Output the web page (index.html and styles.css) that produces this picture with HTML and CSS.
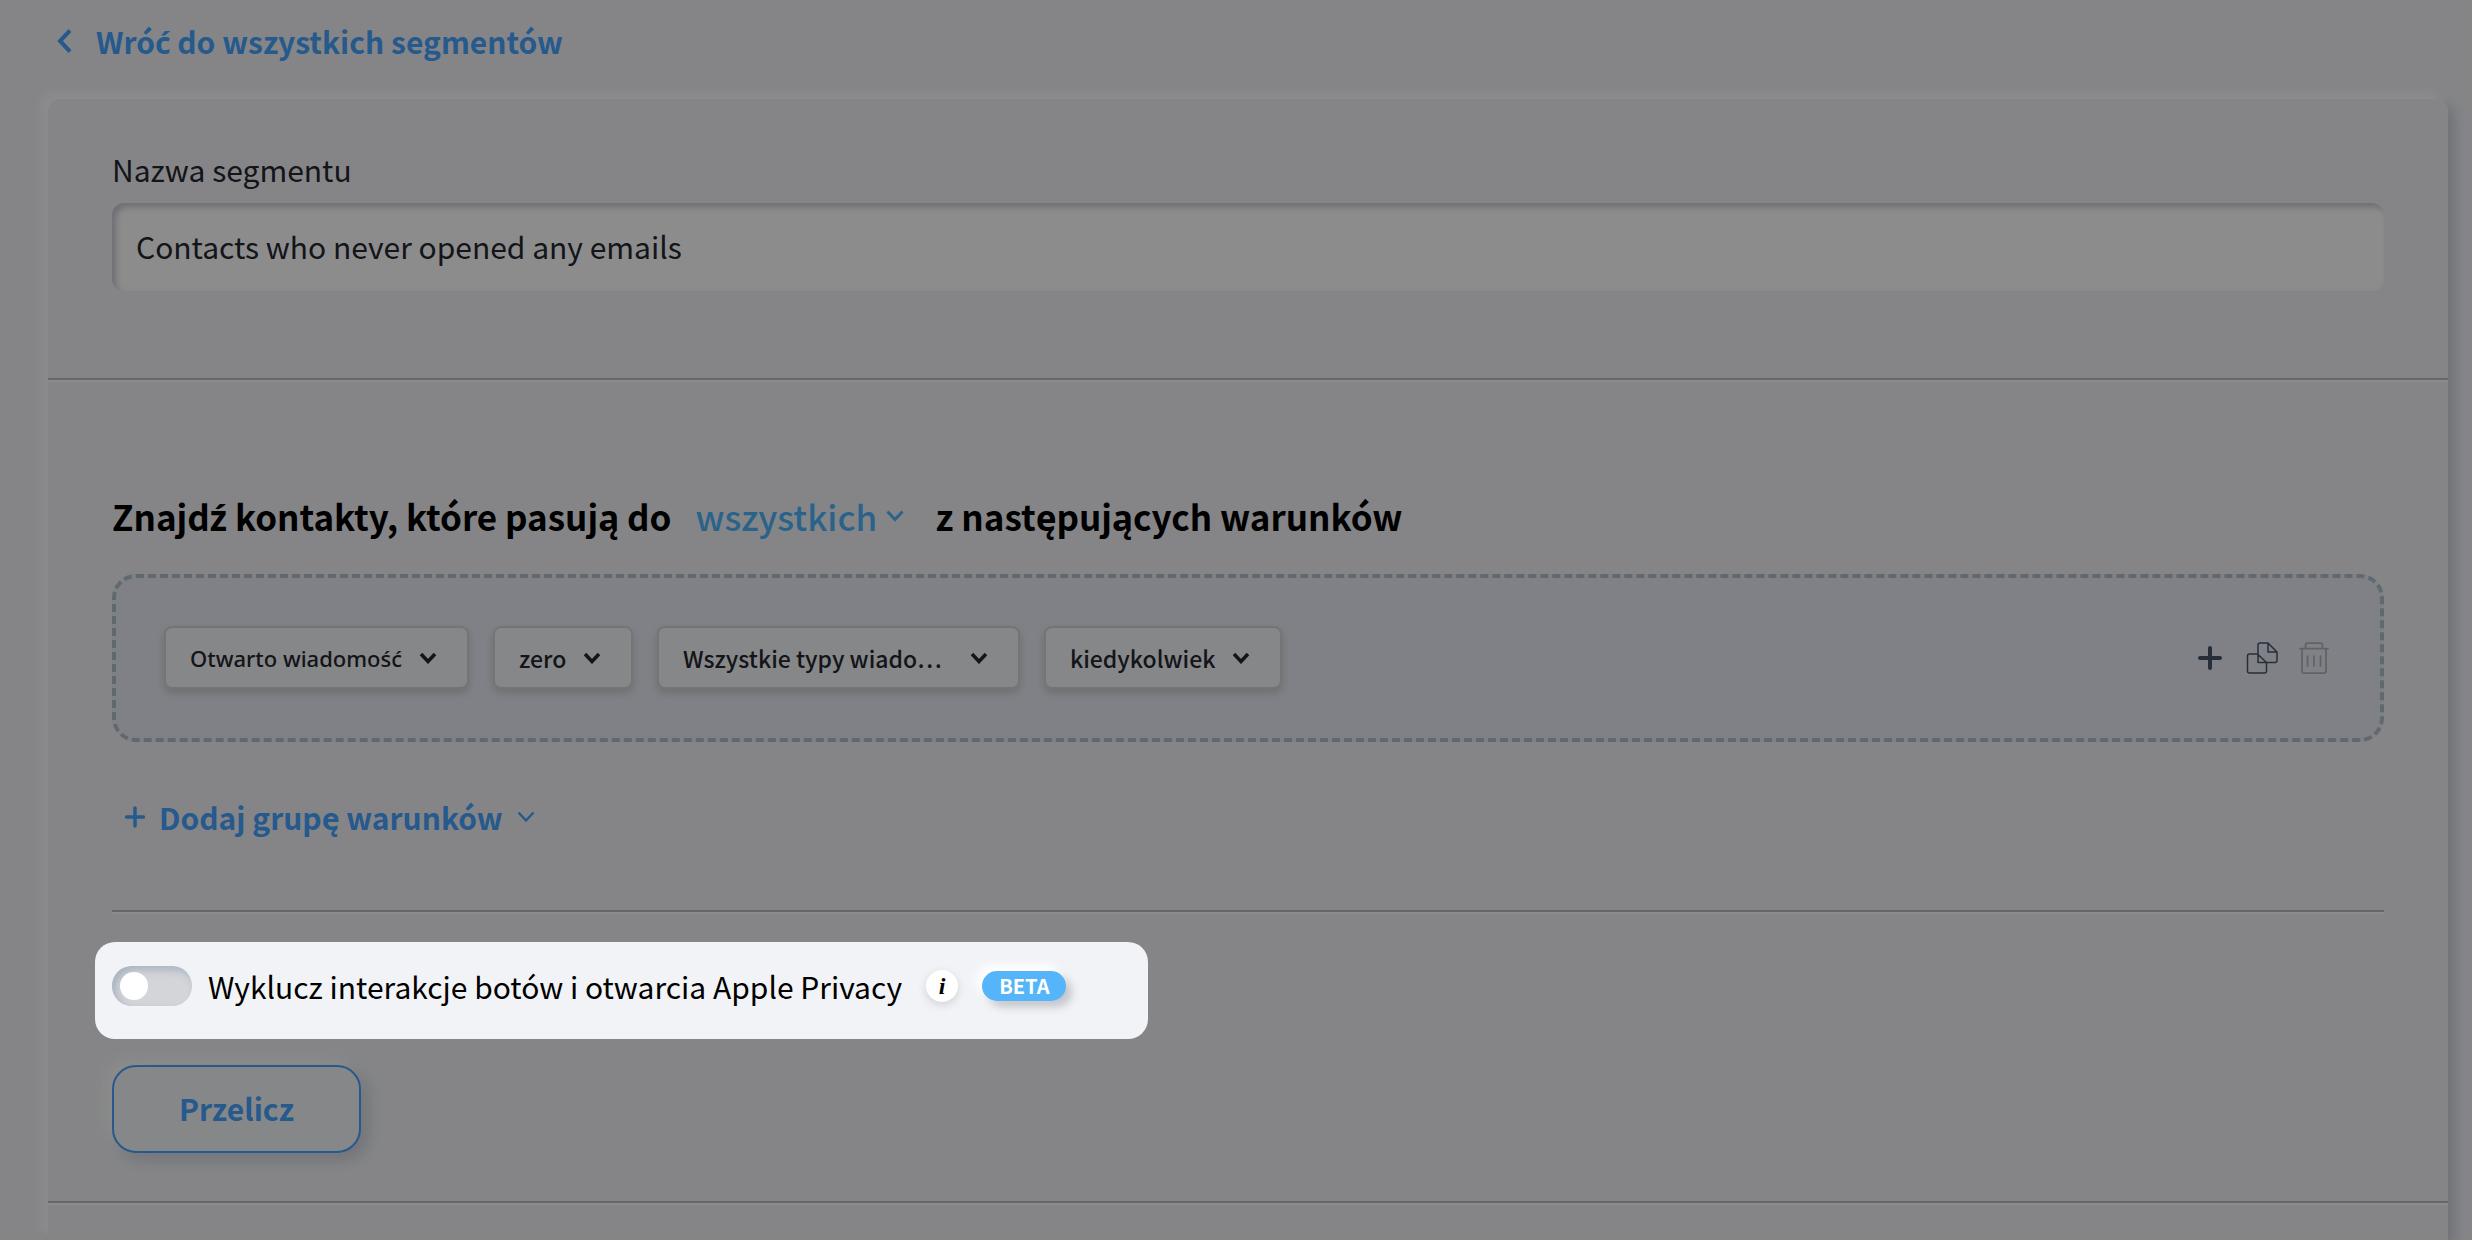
FILE: index.html
```html
<!DOCTYPE html>
<html lang="pl">
<head>
    <meta charset="UTF-8">
    <meta name="viewport" content="width=device-width, initial-scale=1.0">
    <title>Segmenty</title>
    <link rel="stylesheet" href="styles.css">
</head>
<body>
    <a href="#" class="back-link">
        <svg width="16" height="24" viewBox="0 0 16 24" fill="none" stroke="currentColor" stroke-width="4"><path d="M14 1.500L4 12l10 10.500"/></svg>
        <span>Wró<span class="accent">ć</span> do wszystkich segmentów</span>
    </a>

    <main class="card">
        <section class="name-section">
            <label for="segmentName">Nazwa segmentu</label>
            <input type="text" id="segmentName" value="Contacts who never opened any emails">
        </section>

        <section class="conditions">
            <h2>
                <label for="matchType">Znajd<span class="accent">ź</span> kontakty, które pasują do</label>
                <span class="match-select">
                    <select id="matchType"><option>wszystkich</option></select>
                    <svg width="18" height="12" viewBox="0 0 18 12" fill="none" stroke="currentColor" stroke-width="3"><path d="M1.500 1.500L9 9.500l7.500-8"/></svg>
                </span>
                <span>z następujących warunków</span>
            </h2>

            <div class="group">
                <div class="select">
                    <select class="accent" aria-label="Warunek"><option>Otwarto wiadomość</option></select>
                    <svg width="18" height="12" viewBox="0 0 18 12" fill="none" stroke="currentColor" stroke-width="3.500"><path d="M2 2l7 7.500L16 2"/></svg>
                </div>
                <div class="select">
                    <select aria-label="Liczba"><option>zero</option></select>
                    <svg width="18" height="12" viewBox="0 0 18 12" fill="none" stroke="currentColor" stroke-width="3.500"><path d="M2 2l7 7.500L16 2"/></svg>
                </div>
                <div class="select wide">
                    <select aria-label="Typ wiadomości"><option>Wszystkie typy wiado…</option></select>
                    <svg width="18" height="12" viewBox="0 0 18 12" fill="none" stroke="currentColor" stroke-width="3.500"><path d="M2 2l7 7.500L16 2"/></svg>
                </div>
                <div class="select">
                    <select aria-label="Okres"><option>kiedykolwiek</option></select>
                    <svg width="18" height="12" viewBox="0 0 18 12" fill="none" stroke="currentColor" stroke-width="3.500"><path d="M2 2l7 7.500L16 2"/></svg>
                </div>

                <div class="actions">
                    <button type="button" aria-label="Dodaj">
                        <svg width="32" height="32" viewBox="0 0 32 32" fill="none" stroke="currentColor" stroke-width="4" stroke-linecap="round"><path d="M16 6v20M6 16h20"/></svg>
                    </button>
                    <button type="button" aria-label="Kopiuj">
                        <svg width="32" height="32" viewBox="0 0 32 32" fill="none" stroke="currentColor" stroke-width="1.500" stroke-linejoin="round"><path d="M12 12H3.500a2 2 0 0 0-2 2v15a2 2 0 0 0 2 2h15a2 2 0 0 0 2-2v-8.500M12 12.500l8.500 8M12 20.500V3a2 2 0 0 1 2-2h8l9 9v8.500a2 2 0 0 1-2 2H12zM22 1v9h9"/></svg>
                    </button>
                    <button type="button" class="delete" aria-label="Usuń" disabled>
                        <svg width="32" height="32" viewBox="0 0 32 32" fill="none" stroke="currentColor" stroke-width="1.750" stroke-linecap="round"><path d="M2 6.500h28M4 6.500V29a2 2 0 0 0 2 2h20a2 2 0 0 0 2-2V6.500M7.500 6.500V3a2 2 0 0 1 2-2h13a2 2 0 0 1 2 2v3.500M9.500 14v10M16 14v10M22.500 14v10"/></svg>
                    </button>
                </div>
            </div>

            <button type="button" class="add-group">
                <svg width="20" height="22" viewBox="0 0 20 22" fill="none" stroke="currentColor" stroke-width="3.500" stroke-linecap="round"><path d="M10 2v18M1.500 11h17"/></svg>
                Dodaj grupę warunków
                <svg width="18" height="12" viewBox="0 0 18 12" fill="none" stroke="currentColor" stroke-width="2.500"><path d="M1.500 1.500L9 9.500l7.500-8"/></svg>
            </button>
        </section>

        <section class="summary">
            <!-- Highlighted option, the rest of the page is dimmed -->
            <div class="spotlight">
                <input type="checkbox" id="excludeBots" class="toggle">
                <label for="excludeBots">Wyklucz interakcje botów i otwarcia Apple Privacy</label>
                <button type="button" class="info" aria-label="Informacja">i</button>
                <span class="badge">BETA</span>
            </div>

            <button type="button" class="recalculate">Przelicz</button>
        </section>

        <section class="results"></section>
    </main>
</body>
</html>
```
FILE: styles.css
```css
/* General Reset */
* {
    margin: 0;
    padding: 0;
    box-sizing: border-box;
}

body {
    background-color: #f2f3f7;
    color: #000;
    font-family: "Noto Sans CJK SC", "Noto Sans", sans-serif;
    font-size: 30px;
    line-height: 40px;
    min-height: 100vh;
    padding: 21px 24px 0 48px;
    display: flex;
    flex-direction: column;
    overflow: hidden;
}

input,
select,
button {
    font: inherit;
    color: inherit;
    border: none;
    background: none;
    appearance: none;
}

button,
select {
    cursor: pointer;
}

/* Letters with an acute accent that the main font lacks */
.accent {
    font-family: "Noto Sans", sans-serif;
    line-height: 1;
}

/* Back Link */
.back-link {
    display: flex;
    align-items: center;
    gap: 24px;
    align-self: flex-start;
    padding-left: 8px;
    color: #45a3ff;
    font-weight: bold;
    text-decoration: none;
}

/* Card */
.card {
    flex: 1;
    margin-top: 38px;
    border-radius: 12px 12px 0 0;
    background: #f2f3f7;
    box-shadow: -6px -6px 10px #fff, 6px 6px 14px #c8cad6;
}

/* Segment Name */
.name-section {
    padding: 50px 64px 87px;
    border-bottom: 2px solid #bcbcbc;
    box-shadow: 0 2px 0 #fff;
}

.name-section label {
    display: block;
    margin-bottom: 14px;
    color: #26272f;
}

.name-section input {
    width: 100%;
    height: 88px;
    padding: 0 24px 3px;
    border-radius: 12px;
    background: #fff;
    color: #26272f;
    box-shadow: inset 4px 4px 6px #c8cad2;
}

/* Conditions */
.conditions {
    margin: 0 64px;
    padding: 110px 0 73px;
    border-bottom: 2px solid #bcbcbc;
    box-shadow: 0 2px 0 #fff;
}

.conditions h2 {
    display: flex;
    align-items: center;
    font-size: 35px;
    line-height: 52px;
}

.match-select {
    display: flex;
    align-items: center;
    gap: 8px;
    margin: 0 32px 0 24px;
    color: #4eb5fc;
    font-weight: 500;
}

.group {
    display: flex;
    align-items: center;
    gap: 24px;
    margin-top: 32px;
    padding: 48px 50px 49px 48px;
    border: 4px dashed #b0bfcc;
    border-radius: 24px;
    background: #e7ecf4;
}

.select {
    display: grid;
    align-items: center;
    color: #26272f;
    font-size: 23px;
    font-weight: 500;
}

.select select,
.select svg {
    grid-area: 1 / 1;
}

.select select {
    height: 63px;
    padding: 0 64px 0 24px;
    border: 2px solid #d6d6d8;
    border-radius: 8px;
    background: #f5f6f8;
    box-shadow: 0 4px 8px #c8c8cc;
}

.select .accent {
    font-size: 22px;
}

.select svg {
    justify-self: end;
    margin-right: 32px;
    pointer-events: none;
}

.select.wide select {
    padding-right: 76px;
}

.actions {
    display: flex;
    gap: 20px;
    margin-left: auto;
    color: #4a5568;
}

.actions button,
.actions svg {
    display: block;
}

.actions .delete {
    color: #b0b3b9;
}

.add-group {
    display: flex;
    align-items: center;
    gap: 14px;
    margin: 55px 0 0 13px;
    color: #45a3ff;
    font-weight: bold;
}

/* Summary */
.summary {
    display: flex;
    flex-direction: column;
    align-items: flex-start;
    padding: 30px 64px 48px;
    border-bottom: 2px solid #bcbcbc;
    box-shadow: 0 2px 0 #fff;
}

.spotlight {
    position: relative;
    z-index: 1;
    display: flex;
    align-items: center;
    margin-left: -17px;
    padding: 24px 82px 33px 17px;
    border-radius: 20px;
    background: #f2f3f7;
    box-shadow: 0 0 0 9999px rgba(0, 0, 0, 0.45);
}

.toggle {
    width: 80px;
    height: 40px;
    margin-right: 16px;
    padding: 6px 8px;
    border-radius: 20px;
    background: #d4d5d9;
    box-shadow: inset 4px 4px 8px #a8b3c0;
    cursor: pointer;
}

.toggle::before {
    content: "";
    display: block;
    width: 28px;
    height: 28px;
    border-radius: 50%;
    background: #fff;
}

.toggle:checked::before {
    margin-left: 36px;
}

.info {
    width: 32px;
    height: 32px;
    margin: 0 24px;
    border-radius: 50%;
    background: #fff;
    box-shadow: 0 3px 8px #d0d1d6;
    font-family: "Liberation Serif", serif;
    font-size: 24px;
    font-style: italic;
    font-weight: bold;
    line-height: 32px;
}

.badge {
    padding: 0 17px;
    border-radius: 15px;
    background: #55b5fa;
    box-shadow: -6px -6px 10px #fff, 6px 6px 8px #c4c5ca;
    color: #fff;
    font-size: 20px;
    font-weight: bold;
    line-height: 30px;
}

.recalculate {
    height: 88px;
    margin-top: 26px;
    padding: 0 65px 2px;
    border: 2px solid #45a3ff;
    border-radius: 24px;
    background: #f5f6f8;
    box-shadow: -6px -6px 16px #fff, 6px 6px 16px #c8ccd6;
    color: #45a3ff;
    font-weight: bold;
}
```
